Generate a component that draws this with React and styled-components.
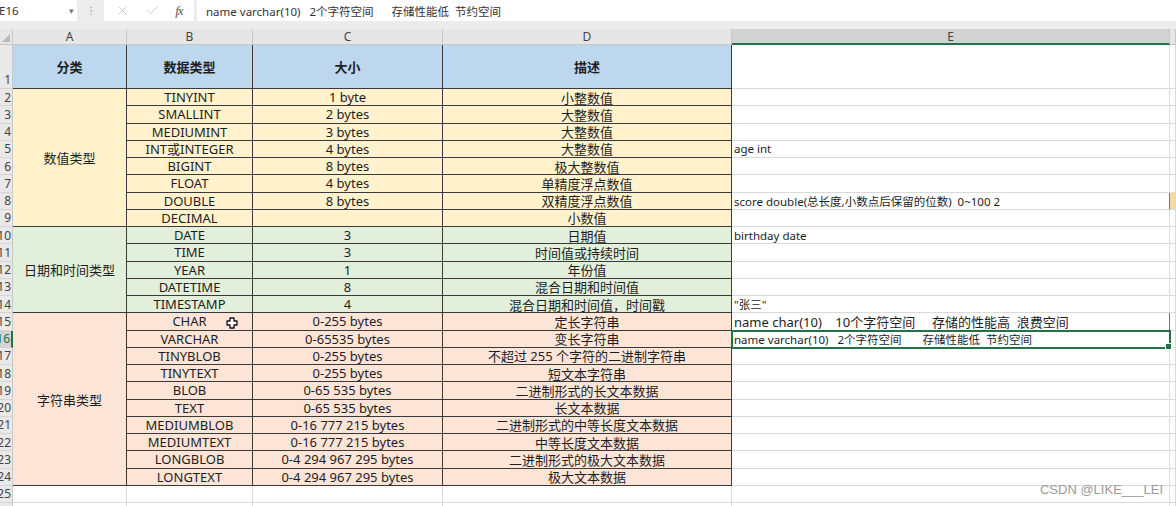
import React from "react";
import styled, { createGlobalStyle } from "styled-components";
import { X, Check, EllipsisVertical } from "lucide-react";

// 표 데이터
const rows = [
  ["TINYINT", "1 byte", "小整数值"],
  ["SMALLINT", "2 bytes", "大整数值"],
  ["MEDIUMINT", "3 bytes", "大整数值"],
  ["INT或INTEGER", "4 bytes", "大整数值"],
  ["BIGINT", "8 bytes", "极大整数值"],
  ["FLOAT", "4 bytes", "单精度浮点数值"],
  ["DOUBLE", "8 bytes", "双精度浮点数值"],
  ["DECIMAL", "", "小数值"],
  ["DATE", "3", "日期值"],
  ["TIME", "3", "时间值或持续时间"],
  ["YEAR", "1", "年份值"],
  ["DATETIME", "8", "混合日期和时间值"],
  ["TIMESTAMP", "4", "混合日期和时间值，时间戳"],
  ["CHAR", "0-255 bytes", "定长字符串"],
  ["VARCHAR", "0-65535 bytes", "变长字符串"],
  ["TINYBLOB", "0-255 bytes", "不超过 255 个字符的二进制字符串"],
  ["TINYTEXT", "0-255 bytes", "短文本字符串"],
  ["BLOB", "0-65 535 bytes", "二进制形式的长文本数据"],
  ["TEXT", "0-65 535 bytes", "长文本数据"],
  ["MEDIUMBLOB", "0-16 777 215 bytes", "二进制形式的中等长度文本数据"],
  ["MEDIUMTEXT", "0-16 777 215 bytes", "中等长度文本数据"],
  ["LONGBLOB", "0-4 294 967 295 bytes", "二进制形式的极大文本数据"],
  ["LONGTEXT", "0-4 294 967 295 bytes", "极大文本数据"],
];

// 분류 그룹 (시작 행, 행 수, 색)
const groups = [
  { start: 2, span: 8, label: "数值类型", bg: "#FFF2CC" },
  { start: 10, span: 5, label: "日期和时间类型", bg: "#E2EFDA" },
  { start: 15, span: 10, label: "字符串类型", bg: "#FCE4D6" },
];

const notes = {
  5: "age int",
  8: "score double(总长度,小数点后保留的位数)  0~100 2",
  10: "birthday date",
  14: '"张三"',
  15: "name char(10)    10个字符空间     存储的性能高  浪费空间",
  16: "name varchar(10)   2个字符空间       存储性能低  节约空间",
};

const formula = "name varchar(10)   2个字符空间      存储性能低  节约空间";

const bgOf = (r) => groups.find((g) => r >= g.start && r < g.start + g.span).bg;

const DARK = "#3a3a3a";

function App() {
  return (
    <Page>
      <GlobalStyle />
      <FormulaBar>
        <NameBox>
          E16
          <Caret>▾</Caret>
        </NameBox>
        <Dots>
          <EllipsisVertical size={12} strokeWidth={2} />
        </Dots>
        <IconBox>
          <X size={15} strokeWidth={1.4} color="#c4c4c4" />
          <Check size={15} strokeWidth={1.4} color="#c4c4c4" />
          <Fx>fx</Fx>
        </IconBox>
        <FormulaInput>{formula}</FormulaInput>
      </FormulaBar>

      <Sheet>
        {/* 열 머리글 */}
        <Corner $r={1} $c={1}>
          <CornerMark />
        </Corner>
        {["A", "B", "C", "D", "E", ""].map((l, i) => (
          <ColHead key={i} $r={1} $c={i + 2} $active={l === "E"}>
            {l}
          </ColHead>
        ))}

        {/* 1행: 제목 */}
        <RowHead $r={2} $c={1} $bottom>
          1
        </RowHead>
        {["分类", "数据类型", "大小", "描述"].map((t, i) => (
          <Cell key={t} $r={2} $c={i + 2} $bg="#BDD7EE" $line={DARK} $bold>
            {t}
          </Cell>
        ))}
        <Cell $r={2} $c={6} />
        <Cell $r={2} $c={7} />

        {/* 분류 병합 셀 */}
        {groups.map((g) => (
          <Cell
            key={g.label}
            $r={g.start + 1}
            $span={g.span}
            $c={2}
            $bg={g.bg}
            $line={DARK}
          >
            {g.label}
          </Cell>
        ))}

        {rows.map((row, i) => {
          const r = i + 2;
          const bg = bgOf(r);
          return (
            <React.Fragment key={r}>
              <RowHead $r={r + 1} $c={1} $active={r === 16}>
                {r}
              </RowHead>
              {row.map((t, j) => (
                <Cell key={j} $r={r + 1} $c={j + 3} $bg={bg} $line={DARK}>
                  {t}
                </Cell>
              ))}
              <Cell
                $r={r + 1}
                $c={6}
                $align="left"
                $size={r === 15 ? 13 : 11.5}
                $selected={r === 16}
                $edge={r === 8 || r === 15}
              >
                {notes[r] || ""}
              </Cell>
              <Cell $r={r + 1} $c={7} $bg={r === 8 ? "#F6D9A6" : "#fff"} />
            </React.Fragment>
          );
        })}

        {/* 25, 26행 */}
        {[25, 26].map((r) => (
          <React.Fragment key={r}>
            <RowHead $r={r + 1} $c={1}>
              {r}
            </RowHead>
            {[2, 3, 4, 5, 6, 7].map((c) => (
              <Cell key={c} $r={r + 1} $c={c} />
            ))}
          </React.Fragment>
        ))}
      </Sheet>

      <CursorMark width="12" height="12" viewBox="0 0 12 12">
        <path
          d="M4 1h4v3h3v4H8v3H4V8H1V4h3z"
          fill="#fff"
          stroke="#111"
          strokeWidth="1.3"
          strokeLinejoin="round"
        />
      </CursorMark>

      <Watermark>CSDN @LIKE___LEI</Watermark>
    </Page>
  );
}

const GlobalStyle = createGlobalStyle`
  html, body {
    margin: 0;
    padding: 0;
    background: #fff;
    overflow: hidden;
  }
  body {
    font-family: "Noto Sans", "Noto Sans CJK SC", sans-serif;
  }
`;

const Page = styled.div`
  position: relative;
  width: 1176px;
  height: 506px;
  overflow: hidden;
  background: #fff;
`;

const FormulaBar = styled.div`
  display: flex;
  align-items: stretch;
  height: 21px;
  padding-bottom: 8px;
  background: #ececec;
  font-size: 11.5px;
  color: #333;
`;

const NameBox = styled.div`
  display: flex;
  align-items: center;
  justify-content: space-between;
  width: 78px;
  padding-right: 3px;
  box-sizing: border-box;
  background: #fff;
  margin-left: -1px;
`;

const Caret = styled.span`
  font-size: 9px;
  color: #777;
`;

const Dots = styled.div`
  display: flex;
  align-items: center;
  justify-content: center;
  width: 27px;
  color: #b5b5b5;
`;

const IconBox = styled.div`
  display: flex;
  align-items: center;
  justify-content: space-around;
  width: 90px;
  padding: 0 4px;
  box-sizing: border-box;
  background: #fff;
  margin-right: 3px;
`;

const Fx = styled.span`
  font-family: "Liberation Serif", serif;
  font-style: italic;
  font-size: 13px;
  color: #555;
  letter-spacing: -1px;
`;

const FormulaInput = styled.div`
  flex: 1;
  display: flex;
  align-items: center;
  padding-left: 9px;
  background: #fff;
  white-space: pre;
`;

const Sheet = styled.div`
  display: grid;
  grid-template-columns: 13px 114px 126px 190px 289px 438px 6px;
  grid-template-rows: 16px 44px repeat(25, 17.26px);
`;

const place = (p) => `
  grid-row: ${p.$r} / span ${p.$span || 1};
  grid-column: ${p.$c};
`;

const Corner = styled.div`
  ${place};
  position: relative;
  background: #e6e6e6;
  border-right: 1px solid #c8c8c8;
  border-bottom: 1px solid #c8c8c8;
  box-sizing: border-box;
`;

const CornerMark = styled.div`
  position: absolute;
  right: 2px;
  bottom: 2px;
  width: 0;
  height: 0;
  border-left: 8px solid transparent;
  border-bottom: 8px solid #b9b9b9;
`;

const ColHead = styled.div`
  ${place};
  box-sizing: border-box;
  display: flex;
  align-items: center;
  justify-content: center;
  background: ${(p) => (p.$active ? "#d3d3d3" : "#e6e6e6")};
  border-right: 1px solid #c8c8c8;
  border-bottom: ${(p) => (p.$active ? "2px solid #217346" : "1px solid #c8c8c8")};
  font-size: 12px;
  color: #444;
`;

const RowHead = styled.div`
  ${place};
  box-sizing: border-box;
  display: flex;
  align-items: ${(p) => (p.$bottom ? "flex-end" : "center")};
  justify-content: flex-end;
  overflow: hidden;
  padding-right: 1px;
  background: ${(p) => (p.$active ? "#d3d3d3" : "#e9e9e9")};
  border-right: ${(p) => (p.$active ? "2px solid #217346" : "1px solid #c8c8c8")};
  border-bottom: 1px solid #d4d4d4;
  font-size: 12px;
  color: ${(p) => (p.$active ? "#217346" : "#444")};
`;

const Cell = styled.div`
  ${place};
  position: relative;
  box-sizing: border-box;
  display: flex;
  align-items: center;
  justify-content: ${(p) => (p.$align === "left" ? "flex-start" : "center")};
  padding: ${(p) => (p.$align === "left" ? "0 2px" : "0")};
  background: ${(p) => p.$bg || "#fff"};
  border-right: 1px solid ${(p) => (p.$edge ? "#777" : p.$line || "#dadada")};
  border-bottom: 1px solid ${(p) => p.$line || "#dadada"};
  font-size: ${(p) => p.$size || 13}px;
  font-weight: ${(p) => (p.$bold ? 700 : 400)};
  color: #1e1e1e;
  white-space: pre;
  ${(p) =>
    p.$selected &&
    `
    outline: 2px solid #217346;
    outline-offset: -1px;
    z-index: 1;
    &::after {
      content: "";
      position: absolute;
      right: -3px;
      bottom: -3px;
      width: 5px;
      height: 5px;
      background: #217346;
      border: 1px solid #fff;
    }
  `}
`;

const CursorMark = styled.svg`
  position: absolute;
  left: 226px;
  top: 317px;
`;

const Watermark = styled.div`
  position: absolute;
  right: 13px;
  top: 482px;
  font-family: "Liberation Sans", sans-serif;
  font-size: 13px;
  color: #9a9a9a;
  white-space: pre;
`;

export default App;
